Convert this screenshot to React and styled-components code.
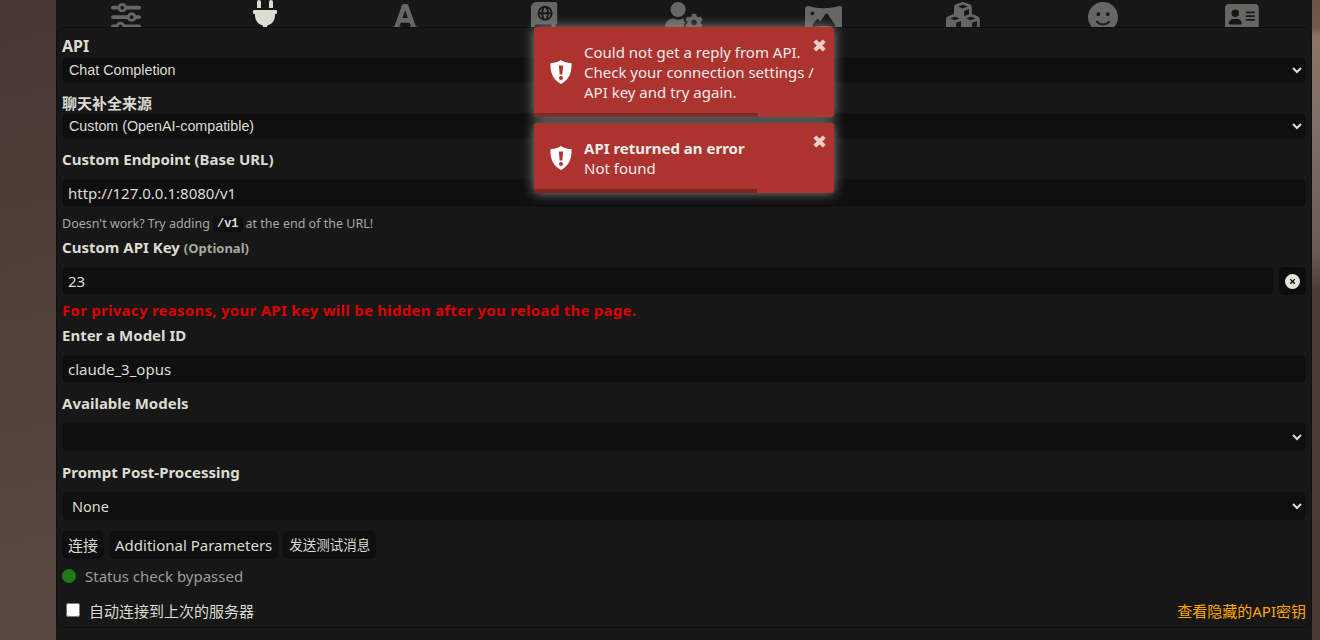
import React from 'react'
import styled, { createGlobalStyle } from 'styled-components'
import { FaSliders, FaBookAtlas, FaPanorama, FaCubes, FaFaceSmile, FaAddressCard, FaCircleXmark } from 'react-icons/fa6'
import { FaPlug, FaUserCog, FaFont } from 'react-icons/fa'

const GlobalStyle = createGlobalStyle`
  html, body {
    margin: 0;
    padding: 0;
    height: 640px;
    overflow: hidden;
    background: #4a3b35;
  }
  * {
    box-sizing: border-box;
  }
`

const Page = styled.div`
  width: 1320px;
  height: 640px;
  overflow: hidden;
  position: relative;
  padding: 0 8px 0 56px;
  font-family: "Noto Sans", "Noto Sans CJK SC", sans-serif;
  font-size: 15px;
  color: #dcdcd2;
  color-scheme: dark;
  background:
    linear-gradient(180deg, #6b5547 0, #6f5a4c 28px, #8b7666 36px, #7f6f65 130px, #6a5c54 250px, #4c3c36 290px, #4a3a34 100%) right top / 8px 100% no-repeat,
    linear-gradient(165deg, #463833 0%, #54443d 45%, #66534a 100%);
`

const Shell = styled.div`
  height: 640px;
  background: #171717;
`

const TopBar = styled.nav`
  display: grid;
  grid-template-columns: repeat(9, 1fr);
  height: 27px;
  overflow: hidden;
  align-items: end;
  justify-items: center;
  padding-bottom: 3px;
`

const TopIcon = styled.span`
  display: block;
  line-height: 0;
  color: ${p => (p.$active ? '#dcdcd2' : '#666662')};
  margin-bottom: ${p => p.$drop || '0'};

  svg {
    display: block;
    width: ${p => p.$width};
    height: ${p => p.$height || '30px'};
  }
`

const Panel = styled.main`
  height: 601px;
  padding: 8px 5px 0;
  border: 1px solid #0f0f0f;
  border-radius: 10px;
`

const Label = styled.div`
  font-weight: 700;
  font-size: ${p => p.$size || '15px'};
  line-height: 20px;
  margin-top: ${p => p.$top || '0'};
  margin-bottom: ${p => p.$bottom || '0'};
`

const Small = styled.small`
  font-size: 13px;
  color: #a8a8a0;
`

const Select = styled.select`
  display: block;
  width: 100%;
  height: ${p => (p.$tall ? '28px' : '26px')};
  padding: 0 ${p => (p.$noto ? '5px' : '2px')};
  border: 1px solid #111;
  border-radius: 5px;
  background: #0f0f0f;
  color: #dcdcd2;
  font-family: ${p => (p.$noto ? '"Noto Sans", sans-serif' : '"Liberation Sans", sans-serif')};
  font-size: ${p => (p.$noto ? '14.5px' : '14.3px')};
`

const Input = styled.input`
  display: block;
  width: 100%;
  height: 28px;
  padding: 0 5px;
  border: 1px solid #111;
  border-radius: 5px;
  background: #0f0f0f;
  color: #dcdcd2;
  font-family: "Noto Sans", sans-serif;
  font-size: 15px;
  outline: none;
`

const Hint = styled.div`
  font-size: 12.5px;
  line-height: 20px;
  color: #a8a8a0;
  margin-top: 7px;
  display: flex;
  align-items: center;
  gap: 3px;
`

const Code = styled.code`
  font-family: "Liberation Mono", monospace;
  font-size: 12px;
  font-weight: 700;
  color: #dcdcd2;
  background: #0f0f0f;
  border-radius: 4px;
  padding: 0 4px;
  line-height: 16px;
`

const KeyRow = styled.div`
  display: flex;
  gap: 5px;
`

const ClearButton = styled.div`
  flex: 0 0 27px;
  height: 28px;
  border-radius: 5px;
  background: #0c0c0c;
  display: flex;
  align-items: center;
  justify-content: center;
  color: #e4e4da;
  font-size: 15px;
`

const Warning = styled.div`
  font-weight: 700;
  font-size: 15px;
  line-height: 20px;
  letter-spacing: 0.27px;
  color: #dc0000;
  margin-top: 5px;
`

const Buttons = styled.div`
  display: flex;
  gap: 5px;
  margin-top: 11px;
`

const Button = styled.div`
  height: 28px;
  line-height: 28px;
  padding: 0 6px;
  border-radius: 5px;
  background: #0f0f0f;
  font-size: ${p => (p.$small ? '13.5px' : '15px')};
`

const Status = styled.div`
  display: flex;
  align-items: center;
  gap: 9px;
  margin-top: 7px;
  height: 20px;
  color: #9c9c94;
`

const Dot = styled.span`
  width: 14px;
  height: 14px;
  border-radius: 50%;
  background: #1f7a16;
`

const Footer = styled.div`
  display: flex;
  align-items: center;
  justify-content: space-between;
  margin-top: 14px;
  height: 20px;
`

const AutoConnect = styled.label`
  display: flex;
  align-items: center;
  gap: 9px;
  padding-left: 4px;
  font-size: 15px;
`

const Check = styled.input`
  width: 14px;
  height: 14px;
  margin: 0;
  color-scheme: light;
`

const Reveal = styled.span`
  color: #ffa500;
  font-size: 15px;
`

const Toasts = styled.div`
  position: absolute;
  top: 27px;
  left: 534px;
  width: 300px;
  display: flex;
  flex-direction: column;
  gap: 6px;
`

const Toast = styled.div`
  position: relative;
  display: flex;
  align-items: center;
  height: ${p => p.$height};
  padding: 0 14px 0 50px;
  background: #ac332e;
  border-radius: 3px;
  box-shadow: 0 0 12px #8a8a8a;
  color: #ececec;
  font-size: 15px;
  line-height: 20px;
`

const ShieldIcon = styled.svg`
  position: absolute;
  left: 16px;
  top: 50%;
  width: 22px;
  height: 24px;
  transform: translateY(-50%);
`

const Close = styled.span`
  position: absolute;
  top: 9px;
  right: 7px;
  font-family: "DejaVu Sans", sans-serif;
  font-size: 18px;
  line-height: 20px;
  font-weight: 700;
  color: #eccfcd;
`

const Progress = styled.div`
  position: absolute;
  left: 0;
  bottom: 0;
  height: 4px;
  background: #7c2523;
  border-radius: 0 0 0 3px;
`

const Strong = styled.div`
  font-weight: 700;
`

const tabs = [
  { Icon: FaSliders, width: '30px' },
  { Icon: FaPlug, active: true, width: '24px', height: '32px' },
  { Icon: FaFont, width: '26.25px' },
  { Icon: FaBookAtlas, width: '26.25px' },
  { Icon: FaUserCog, width: '37.5px' },
  { Icon: FaPanorama, width: '37.5px', drop: '-2px' },
  { Icon: FaCubes, width: '33.75px' },
  { Icon: FaFaceSmile, width: '30px' },
  { Icon: FaAddressCard, width: '33.75px' },
]

function Shield() {
  return (
    <ShieldIcon viewBox="0 0 22 24">
      <path fill="#fff" d="M11 0 C13.5 1.8 17 3 21.5 3.2 C22 12 19 20 11 24 C3 20 0 12 0.5 3.2 C5 3 8.5 1.8 11 0 Z" />
      <path fill="#ac332e" d="M8.9 5.5 H13.1 L12.3 14.5 H9.7 Z" />
      <circle fill="#ac332e" cx="11" cy="18" r="2" />
    </ShieldIcon>
  )
}

function ErrorToast({ height, bar, children }) {
  return (
    <Toast $height={height}>
      <Shield />
      <div>{children}</div>
      <Close>✖</Close>
      <Progress style={{ width: bar }} />
    </Toast>
  )
}

export default function App() {
  return (
    <Page>
      <GlobalStyle />
      <Shell>
        <TopBar>
          {tabs.map(({ Icon, active, width, height, drop }, i) => (
            <TopIcon key={i} $active={active} $width={width} $height={height} $drop={drop}><Icon /></TopIcon>
          ))}
        </TopBar>
        <Panel>
          <Label $size="16px" $bottom="1px">API</Label>
          <Select defaultValue="chat">
            <option value="chat">Chat Completion</option>
          </Select>
          <Label $top="10px">聊天补全来源</Label>
          <Select defaultValue="custom">
            <option value="custom">Custom (OpenAI-compatible)</option>
          </Select>
          <Label $top="10px" $bottom="10px">Custom Endpoint (Base URL)</Label>
          <Input defaultValue="http://127.0.0.1:8080/v1" />
          <Hint>Doesn't work? Try adding <Code>/v1</Code> at the end of the URL!</Hint>
          <Label $top="3px" $bottom="9px">Custom API Key <Small>(Optional)</Small></Label>
          <KeyRow>
            <Input defaultValue="23" />
            <ClearButton><FaCircleXmark /></ClearButton>
          </KeyRow>
          <Warning>For privacy reasons, your API key will be hidden after you reload the page.</Warning>
          <Label $top="5px" $bottom="10px">Enter a Model ID</Label>
          <Input defaultValue="claude_3_opus" />
          <Label $top="10px" $bottom="10px">Available Models</Label>
          <Select $tall />
          <Label $top="11px" $bottom="10px">Prompt Post-Processing</Label>
          <Select $tall $noto defaultValue="none">
            <option value="none">None</option>
          </Select>
          <Buttons>
            <Button>连接</Button>
            <Button>Additional Parameters</Button>
            <Button $small>发送测试消息</Button>
          </Buttons>
          <Status><Dot />Status check bypassed</Status>
          <Footer>
            <AutoConnect><Check type="checkbox" />自动连接到上次的服务器</AutoConnect>
            <Reveal>查看隐藏的API密钥</Reveal>
          </Footer>
        </Panel>
      </Shell>
      <Toasts>
        <ErrorToast height="90px" bar="224px">
          Could not get a reply from API. Check your connection settings / API key and try again.
        </ErrorToast>
        <ErrorToast height="70px" bar="223px">
          <Strong>API returned an error</Strong>
          Not found
        </ErrorToast>
      </Toasts>
    </Page>
  )
}
